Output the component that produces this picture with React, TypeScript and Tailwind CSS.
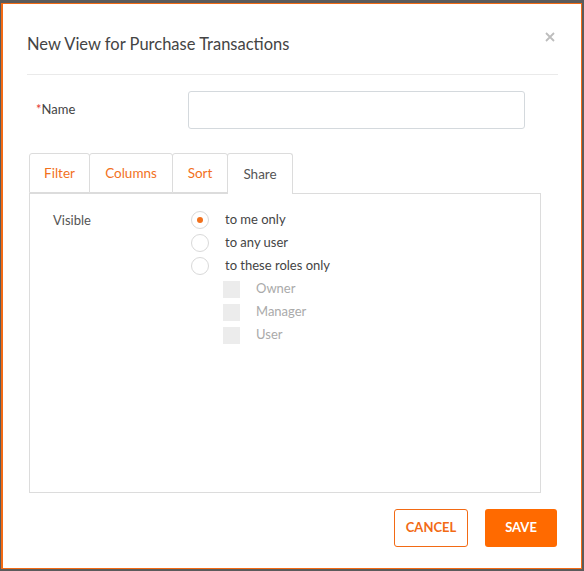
import { useState } from 'react';

const TABS = [
  { name: 'Filter', w: 'w-[61px]' },
  { name: 'Columns', w: 'w-[84px]' },
  { name: 'Sort', w: 'w-[56px]' },
  { name: 'Share', w: 'w-[66px]' },
];
const ROLES = ['Owner', 'Manager', 'User'];
const OPTIONS = [
  { id: 'me', label: 'to me only' },
  { id: 'any', label: 'to any user' },
  { id: 'roles', label: 'to these roles only' },
];

export default function App() {
  const [tab, setTab] = useState('Share');
  const [visible, setVisible] = useState('me');
  const [name, setName] = useState('');

  return (
    <div
      className="h-[571px] w-[584px] bg-[#5b5b5b] pt-[3px] pl-[1px] pr-[2px] pb-[2px] text-[#444]"
      style={{ fontFamily: 'Lato, "Noto Sans", sans-serif' }}
    >
      <div className="relative flex h-full flex-col border border-l-2 border-[#f26a14] bg-white pl-[24px] pr-[23px]">
        <button type="button" className="absolute right-[26px] top-[28px] text-[#bdbdbd]">
          <svg className="h-[10px] w-[10px]" viewBox="0 0 10 10" fill="none" stroke="currentColor" strokeWidth={1.8}>
            <path d="M1 1l8 8M9 1L1 9" />
          </svg>
        </button>

        <div className="border-b border-[#eaeaea] pt-[26px] pb-[16px]">
          <h1 className="text-[16.5px] leading-[28px] text-[#444]">New View for Purchase Transactions</h1>
        </div>

        <div className="mt-[16px] flex items-center">
          <label className="w-[161px] pl-[9px] text-[13px] text-[#444]">
            <span className="text-[#e53935]">*</span>Name
          </label>
          <input
            value={name}
            onChange={(e) => setName(e.target.value)}
            className="h-[38px] w-[337px] rounded-[3px] border border-[#d4d9dd] px-3 text-[13px] outline-none"
          />
        </div>

        <div className="mt-[24px] ml-[2px] flex h-[40px]">
          {TABS.map((t, i) => (
            <button
              key={t.name}
              type="button"
              onClick={() => setTab(t.name)}
              className={`${t.w} ${i > 0 ? '-ml-px' : ''} ${
                t.name === tab
                  ? 'relative z-10 h-[41px] rounded-t-[3px] border border-b-0 border-[#dcdcdc] bg-white text-[13.5px] text-[#555]'
                  : 'h-[40px] rounded-t-[3px] border border-[#dcdcdc] bg-white text-[13.5px] text-[#f2711c]'
              }`}
            >
              {t.name}
            </button>
          ))}
        </div>

        <div className="ml-[2px] h-[300px] w-[512px] border border-[#dcdcdc] pl-[23px] pt-[16px]">
          <div className="flex">
            <div className="w-[138px] text-[13px] leading-[20px] text-[#555]">Visible</div>
            <div className="flex flex-col gap-[3px]">
              {OPTIONS.map((o) => (
                <label key={o.id} className="flex h-[20px] cursor-pointer items-center text-[13px] text-[#444]">
                  <span
                    onClick={() => setVisible(o.id)}
                    className="flex h-[18px] w-[18px] items-center justify-center rounded-full border border-[#d9d9d9] bg-white"
                  >
                    {visible === o.id && <span className="h-[6px] w-[6px] rounded-full bg-[#f2711c]" />}
                  </span>
                  <span className="ml-[16px]">{o.label}</span>
                </label>
              ))}
              {ROLES.map((r) => (
                <div key={r} className="flex h-[20px] items-center pl-[32px] text-[13px] text-[#aaa]">
                  <span className="h-[17px] w-[17px] bg-[#ececec]" />
                  <span className="ml-[16px]">{r}</span>
                </div>
              ))}
            </div>
          </div>
        </div>

        <div className="mt-[16px] flex justify-end gap-[17px] pr-[1px]">
          <button
            type="button"
            className="h-[38px] w-[74px] rounded-[3px] border border-[#f26a14] bg-white text-[13px] font-bold text-[#f26a14]"
          >
            CANCEL
          </button>
          <button
            type="button"
            className="h-[38px] w-[72px] rounded-[3px] bg-[#ff6a00] text-[13px] font-bold text-white"
          >
            SAVE
          </button>
        </div>
      </div>
    </div>
  );
}
